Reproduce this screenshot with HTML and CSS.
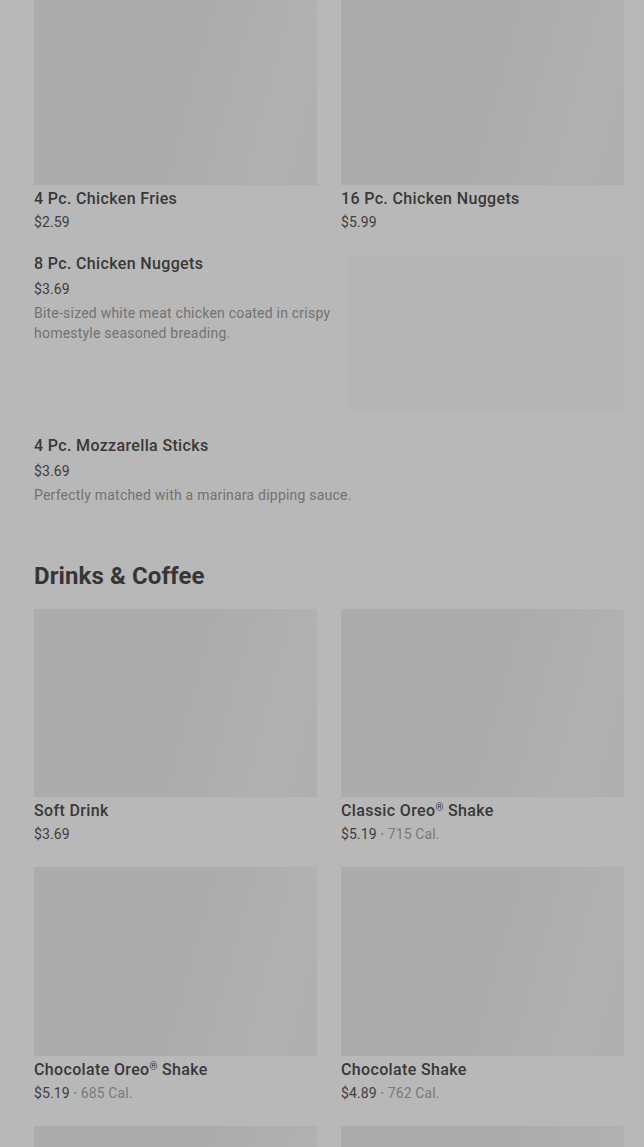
FILE: index.html
```html
<!DOCTYPE html>
<html lang="en">
<head>
<meta charset="utf-8">
<title>Menu</title>
<link rel="stylesheet" href="styles.css">
</head>
<body>
<main class="page">
  <section class="grid">
    <article class="card">
      <div class="thumb"></div>
      <h3 class="name">4 Pc. Chicken Fries</h3>
      <p class="meta"><span class="price">$2.59</span></p>
    </article>
    <article class="card">
      <div class="thumb"></div>
      <h3 class="name">16 Pc. Chicken Nuggets</h3>
      <p class="meta"><span class="price">$5.99</span></p>
    </article>
  </section>

  <section class="list">
    <article class="row">
      <div class="row-text">
        <h3 class="row-name">8 Pc. Chicken Nuggets</h3>
        <p class="row-price">$3.69</p>
        <p class="row-desc">Bite-sized white meat chicken coated in crispy homestyle seasoned breading.</p>
      </div>
      <div class="row-thumb"></div>
    </article>
    <article class="row">
      <div class="row-text">
        <h3 class="row-name">4 Pc. Mozzarella Sticks</h3>
        <p class="row-price">$3.69</p>
        <p class="row-desc">Perfectly matched with a marinara dipping sauce.</p>
      </div>
    </article>
  </section>

  <h2 class="section-title">Drinks &amp; Coffee</h2>

  <section class="grid">
    <article class="card">
      <div class="thumb"></div>
      <h3 class="name">Soft Drink</h3>
      <p class="meta"><span class="price">$3.69</span></p>
    </article>
    <article class="card">
      <div class="thumb"></div>
      <h3 class="name">Classic Oreo<span class="reg">®</span> Shake</h3>
      <p class="meta"><span class="price">$5.19</span><span class="dot">•</span><span class="cal">715 Cal.</span></p>
    </article>
    <article class="card">
      <div class="thumb"></div>
      <h3 class="name">Chocolate Oreo<span class="reg">®</span> Shake</h3>
      <p class="meta"><span class="price">$5.19</span><span class="dot">•</span><span class="cal">685 Cal.</span></p>
    </article>
    <article class="card">
      <div class="thumb"></div>
      <h3 class="name">Chocolate Shake</h3>
      <p class="meta"><span class="price">$4.89</span><span class="dot">•</span><span class="cal">762 Cal.</span></p>
    </article>
    <article class="card">
      <div class="thumb"></div>
    </article>
    <article class="card">
      <div class="thumb"></div>
    </article>
  </section>
</main>
</body>
</html>
```

FILE: styles.css
```css
html, body {
  margin: 0;
  padding: 0;
  background: #b8b8b8;
  overflow: hidden;
}

body {
  font-family: Roboto, "Liberation Sans", Arial, sans-serif;
  color: #363636;
  height: 1147px;
}

.page {
  margin-top: -4px;
  padding: 0 20px 0 34px;
}

.grid {
  display: grid;
  grid-template-columns: 283px 283px;
  column-gap: 24px;
  row-gap: 22px;
}

.card {
  display: flex;
  flex-direction: column;
}

.thumb {
  width: 100%;
  aspect-ratio: 3 / 2;
  background: linear-gradient(105deg, #acacac 0%, #acacac 55%, #b1b1b1 85%, #aeaeae 100%);
}

.name {
  margin: 2px 0 0;
  font-size: 16px;
  line-height: 24px;
  font-weight: 500;
  letter-spacing: 0.35px;
  color: #383838;
}

.reg {
  font-size: 10px;
  vertical-align: 5px;
  line-height: 0;
}

.meta {
  margin: 0;
  font-size: 14px;
  line-height: 22px;
  letter-spacing: 0.1px;
  display: flex;
  align-items: center;
}

.price {
  color: #3e3e3e;
}

.dot {
  color: #7a7a7a;
  font-size: 9px;
  margin: 0 4px;
}

.cal {
  color: #7a7a7a;
}

.list {
  display: flex;
  flex-direction: column;
  gap: 28px;
  margin-top: 23px;
}

.row {
  display: flex;
  gap: 14px;
}

.row-text {
  flex: 1;
  margin-top: -2px;
}

.row-thumb {
  flex: 0 0 276px;
  height: 154px;
  background: #b5b5b5;
}

.row-name {
  margin: 0;
  font-size: 16px;
  line-height: 20px;
  font-weight: 500;
  letter-spacing: 0.35px;
  color: #383838;
}

.row-price {
  margin: 5px 0 0;
  font-size: 14px;
  line-height: 20px;
  letter-spacing: 0.1px;
  color: #3e3e3e;
}

.row-desc {
  margin: 4px 0 0;
  font-size: 14px;
  line-height: 20px;
  letter-spacing: 0.22px;
  color: #727272;
}

.section-title {
  margin: 55px 0 17px;
  font-size: 24px;
  line-height: 32px;
  font-weight: 700;
  letter-spacing: 0.1px;
  color: #363636;
}
```
